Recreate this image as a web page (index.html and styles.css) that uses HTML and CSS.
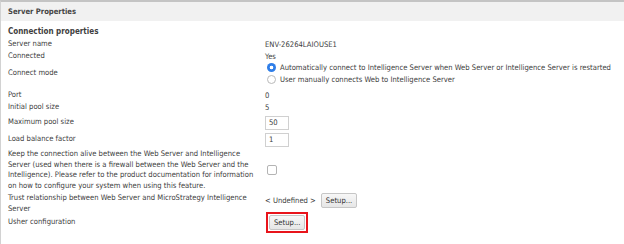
FILE: index.html
```html
<!DOCTYPE html>
<html lang="en">
<head>
    <meta charset="UTF-8">
    <title>Server Properties</title>
    <link rel="stylesheet" href="styles.css">
</head>
<body>
    <div class="panel">
        <div class="panel-head">Server Properties</div>
        <div class="panel-body">
            <div class="section-title">Connection properties</div>

            <div class="row">
                <div class="label">Server name</div>
                <div class="value">ENV-26264LAIOUSE1</div>
            </div>
            <div class="row row-short">
                <div class="label">Connected</div>
                <div class="value">Yes</div>
            </div>
            <div class="row row-radios">
                <div class="label">Connect mode</div>
                <div class="value radios">
                    <label class="radio"><span class="dot checked"></span>Automatically connect to Intelligence Server when Web Server or Intelligence Server is restarted</label>
                    <label class="radio"><span class="dot"></span>User manually connects Web to Intelligence Server</label>
                </div>
            </div>
            <div class="row row-port">
                <div class="label">Port</div>
                <div class="value">0</div>
            </div>
            <div class="row row-pool">
                <div class="label">Initial pool size</div>
                <div class="value">5</div>
            </div>
            <div class="row row-input">
                <div class="label">Maximum pool size</div>
                <div class="value"><span class="field">50</span></div>
            </div>
            <div class="row row-input">
                <div class="label">Load balance factor</div>
                <div class="value"><span class="field">1</span></div>
            </div>
            <div class="row row-multi">
                <div class="label">Keep the connection alive between the Web Server and Intelligence Server (used when there is a firewall between the Web Server and the Intelligence). Please refer to the product documentation for information on how to configure your system when using this feature.</div>
                <div class="value"><span class="check"></span></div>
            </div>
            <div class="row row-trust">
                <div class="label">Trust relationship between Web Server and MicroStrategy Intelligence Server</div>
                <div class="value"><span class="undef">&lt; Undefined &gt;</span><button class="btn">Setup...</button></div>
            </div>
            <div class="row row-usher">
                <div class="label">Usher configuration</div>
                <div class="value"><span class="highlight"><button class="btn">Setup...</button></span></div>
            </div>
        </div>
    </div>
</body>
</html>
```

FILE: styles.css
```css
body {
    margin: 0;
    font-family: "DejaVu Sans Condensed", "DejaVu Sans", sans-serif;
    font-size: 7.6px;
    color: #404040;
    background: #fff;
}
.panel {
    border-top: 2px solid #c4c4c4;
    border-left: 1px solid #d2d2d2;
    height: 242px;
}
.panel-head {
    background: #f1f1f1;
    height: 19px;
    line-height: 19px;
    padding-left: 7px;
    font-weight: bold;
    color: #444;
}
.panel-body {
    padding: 5px 0 0 7px;
}
.section-title {
    font-weight: bold;
    height: 12px;
    line-height: 12px;
    font-size: 8px;
}
.row {
    display: flex;
    align-items: center;
    min-height: 12px;
}
.row-short {
    min-height: 12px;
}
.label {
    width: 250px;
    margin-right: 7px;
    flex: none;
    line-height: 10.7px;
}
.value {
    display: flex;
    align-items: center;
}
.row-radios {
    min-height: 23px;
}
.radios {
    flex-direction: column;
    align-items: flex-start;
}
.radio {
    display: flex;
    align-items: center;
    height: 11.5px;
}
.dot {
    width: 9px;
    height: 9px;
    border: 1px solid #b9b9b9;
    border-radius: 50%;
    margin: 0 4px 0 2px;
    box-sizing: border-box;
    background: #fff;
}
.dot.checked {
    border: none;
    background: radial-gradient(circle, #fff 0 1.6px, #2f7ee8 2.1px);
}
.row-port {
    margin-top: 4px;
}
.row-pool {
    min-height: 13px;
}
.row-input {
    min-height: 17px;
}
.field {
    width: 24px;
    height: 14px;
    box-sizing: border-box;
    border: 1px solid #d0d0d0;
    padding-left: 3px;
    line-height: 12px;
}
.check {
    width: 10px;
    height: 10px;
    box-sizing: border-box;
    border: 1px solid #b4b4b4;
    border-radius: 2px;
    margin-left: 2px;
}
.row-multi {
    padding-top: 1px;
}
.row-trust {
    align-items: flex-start;
    padding-top: 1px;
    margin-bottom: -2px;
}
.undef {
    margin-right: 5px;
}
.btn {
    font-family: inherit;
    font-size: 7.6px;
    color: #333;
    background: linear-gradient(#f7f7f7, #e6e6e6);
    border: 1px solid #c6c6c6;
    border-radius: 2px;
    height: 15px;
    padding: 0 4px;
    margin: 0;
}
.row-usher {
    min-height: 21px;
}
.highlight {
    display: inline-flex;
    border: 2px solid #e8141b;
    padding: 1px;
    margin-left: 1px;
}
```
